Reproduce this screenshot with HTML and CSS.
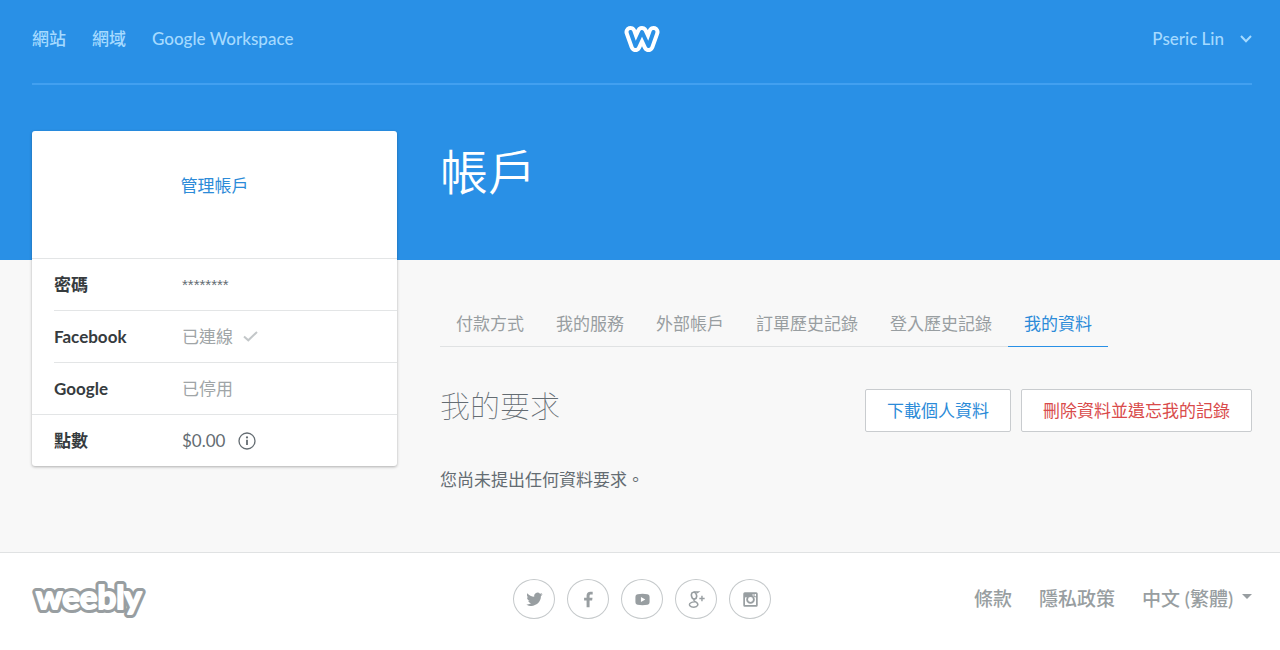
FILE: index.html
```html
<!DOCTYPE html>
<html lang="zh-Hant">
<head>
  <meta charset="UTF-8">
  <meta name="viewport" content="width=device-width, initial-scale=1">
  <title>帳戶</title>
  <link rel="stylesheet" href="styles.css">
</head>
<body>
<header class="topbar">
  <div class="topbar-inner">
    <nav class="topbar-nav">
      <a href="#">網站</a>
      <a href="#">網域</a>
      <a href="#">Google Workspace</a>
    </nav>
    <a class="topbar-logo" href="#" aria-label="Weebly">
      <svg width="36" height="28" viewBox="0 0 36 28" fill="none" stroke-linecap="round" stroke-linejoin="round">
        <path d="M6.500 7 11.500 21 18 7 24.500 21 29.500 7" stroke="#fff" stroke-width="12"/>
        <path d="M6.500 7 11.500 21 18 7 24.500 21 29.500 7" stroke="#2990e6" stroke-width="4"/>
      </svg>
    </a>
    <button class="user-menu" type="button">Pseric Lin
      <svg width="12" height="8" viewBox="0 0 12 8" fill="none" stroke="currentColor" stroke-width="2"><path d="M1 1 6 6.3 11 1"/></svg>
    </button>
  </div>
</header>

<main class="account">
  <aside class="card">
    <div class="card-head"><a href="#">管理帳戶</a></div>
    <dl class="card-rows">
      <div class="row row-full"><dt>密碼</dt><dd class="password">********</dd></div>
      <div class="row"><dt>Facebook</dt>
        <dd class="muted">已連線
          <svg class="check" width="15" height="11" viewBox="0 0 15 11" fill="none" stroke="currentColor" stroke-width="2"><path d="M1 5.5 5.3 9.3 14 1"/></svg>
        </dd>
      </div>
      <div class="row"><dt>Google</dt><dd class="muted">已停用</dd></div>
      <div class="row row-full"><dt>點數</dt>
        <dd>$0.00
          <svg width="18" height="18" viewBox="0 0 18 18" fill="none" stroke="currentColor"><circle cx="9" cy="9" r="8" stroke-width="1.3"/><path d="M9 7.800V13" stroke-width="1.800"/><circle cx="9" cy="5.4" r="1.1" fill="currentColor" stroke="none"/></svg>
        </dd>
      </div>
    </dl>
  </aside>

  <section class="content">
    <h1>帳戶</h1>
    <nav class="tabs">
      <a href="#">付款方式</a>
      <a href="#">我的服務</a>
      <a href="#">外部帳戶</a>
      <a href="#">訂單歷史記錄</a>
      <a href="#">登入歷史記錄</a>
      <a href="#" class="active">我的資料</a>
    </nav>
    <div class="section-head">
      <h2>我的要求</h2>
      <div class="actions">
        <button class="btn" type="button">下載個人資料</button>
        <button class="btn btn-danger" type="button">刪除資料並遺忘我的記錄</button>
      </div>
    </div>
    <p class="empty">您尚未提出任何資料要求。</p>
  </section>
</main>

<footer class="footer">
  <a class="wordmark" href="#" aria-label="weebly">
    <svg width="124" height="46" viewBox="0 0 124 46">
      <text class="wordmark-outline" x="4" y="33">weebly</text>
      <text class="wordmark-fill" x="4" y="33">weebly</text>
    </svg>
  </a>
  <div class="social">
    <a href="#" aria-label="Twitter"><svg width="17" height="17" viewBox="0 0 24 24" fill="currentColor"><path d="M23.5 4.6c-.8.4-1.7.6-2.7.8 1-.6 1.7-1.5 2-2.6-.9.5-1.9.9-3 1.1A4.7 4.7 0 0 0 11.700 8.200C7.800 8 4.300 6.100 2 3.200c-1.200 2.100-.6 4.900 1.500 6.300-.8 0-1.500-.2-2.100-.6 0 2.300 1.600 4.300 3.800 4.700-.7.2-1.400.2-2.100.1.600 1.900 2.400 3.200 4.400 3.300A9.500 9.500 0 0 1 .5 18.900c8.700 5.600 20.700-.5 20.600-11.900.9-.7 1.700-1.500 2.400-2.400z"/></svg></a>
    <a href="#" aria-label="Facebook"><svg width="17" height="17" viewBox="0 0 24 24" fill="currentColor"><path d="M9.300 23V13.500H5.800V9.600h3.500V6.500C9.300 3 11.400 1 14.600 1c1.500 0 2.900.1 3.300.2V5h-2.300c-1.800 0-2.100.9-2.100 2.100v2.500h4.200l-.6 3.900h-3.600V23z"/></svg></a>
    <a href="#" aria-label="YouTube"><svg width="17" height="17" viewBox="0 0 24 24" fill="currentColor" fill-rule="evenodd"><path d="M5 4.500Q12 3.500 19 4.500 22 4.600 22 8v8q0 3.400-3 3.500-7 1-14 0-3-.1-3-3.500V8q0-3.400 3-3.500zM9.800 8.300v7.400l6.200-3.700z"/></svg></a>
    <a href="#" aria-label="Google+"><svg width="17" height="17" viewBox="0 0 24 24" fill="none" stroke="currentColor"><ellipse cx="8.500" cy="6.500" rx="3.600" ry="4.800" stroke-width="2.300" transform="rotate(-12 8.500 6.500)"/><path d="M8 1.300h6.500l-2 1.400M10 11c-3 1.200-2 2.700.3 3.900 6.500 3.400 3.300 8-2 8s-8.200-3.500-4.800-6c1.900-1.500 4.500-1.600 6.300-1.600" stroke-width="2"/><path d="M16 10.500h7.500M19.700 6.700v7.600" stroke-width="2"/></svg></a>
    <a href="#" aria-label="Instagram"><svg width="17" height="17" viewBox="0 0 24 24" fill="none" stroke="currentColor"><rect x="3" y="3" width="18" height="18" rx="1" stroke-width="2.400"/><path d="M3 3.500h12V9H3z" fill="currentColor" stroke="none"/><circle cx="12" cy="12" r="4.800" fill="#fff" stroke-width="2.600"/><path d="M17 4v4h4" stroke-width="1.500"/></svg></a>
  </div>
  <nav class="footer-nav">
    <a href="#">條款</a>
    <a href="#">隱私政策</a>
    <button class="language" type="button">中文 (繁體)<span class="caret"></span></button>
  </nav>
</footer>
</body>
</html>
```
FILE: styles.css
```css
* { box-sizing: border-box; }
body {
  margin: 0;
  min-height: 100vh;
  background: #fff;
  color: #646c72;
  font-family: Lato, "Noto Sans CJK TC", sans-serif;
  font-size: 17px;
  line-height: 24px;
}
a { color: inherit; text-decoration: none; }
button { font: inherit; color: inherit; background: none; border: 0; padding: 0; cursor: pointer; }
svg { display: block; flex: none; }
h1, h2, p, dl, dd { margin: 0; }

/* top bar */
.topbar { background: #2990e6; padding: 0 28px 46px 32px; }
.topbar-inner {
  display: grid;
  grid-template-columns: 1fr auto 1fr;
  align-items: center;
  height: 85px;
  padding-bottom: 5px;
  border-bottom: 2px solid #42a0f0;
  color: #a5daff;
  font-weight: 500;
}
.topbar-nav { display: flex; gap: 26px; }
.user-menu { display: flex; align-items: center; justify-self: end; gap: 16px; }

/* account */
.account {
  display: grid;
  grid-template-columns: 365px minmax(0, 1fr);
  gap: 43px;
  align-items: start;
  padding: 0 28px 60px 32px;
  background: linear-gradient(#2990e6 129px, #f8f8f8 129px);
}
.card { background: #fff; border-radius: 3px; box-shadow: 0 1px 3px rgba(0, 0, 0, .3); }
.card-head { display: flex; align-items: center; justify-content: center; height: 127px; padding-bottom: 17px; color: #2c8bd8; }
.row { display: flex; align-items: center; height: 52px; margin-left: 22px; border-top: 1px solid #e3e5e6; }
.row-full { margin-left: 0; padding-left: 22px; }
.row dt { width: 128px; color: #363b3e; font-weight: 700; }
.row dd { display: flex; align-items: center; gap: 13px; }
.row .muted { color: #a0a5a7; gap: 10px; }
.row .password { font-family: "Liberation Sans", sans-serif; font-size: 15px; }
.check { color: #c3c7c9; }

h1 { padding-top: 5px; color: #fff; font-size: 48px; font-weight: 350; line-height: 72px; }
.tabs { display: flex; margin-top: 95px; color: #989ea1; width: fit-content; box-shadow: inset 0 -1px #e0e2e3; }
.tabs a { padding: 9px 16px 11px; }
.tabs .active { color: #2c8bd8; border-bottom: 1px solid #2990e6; padding-bottom: 10px; }
.section-head { display: flex; justify-content: space-between; align-items: flex-start; margin-top: 42px; }
h2 { font-size: 30px; font-weight: 100; line-height: 32px; }
.actions { display: flex; gap: 10px; }
.btn { height: 43px; padding: 0 21px; background: #fff; border: 1px solid #c9cccf; border-radius: 2px; color: #2c8bd8; }
.btn-danger { color: #d94b4b; }
.empty { margin-top: 36px; }

/* footer */
.footer {
  display: grid;
  grid-template-columns: 1fr auto 1fr;
  align-items: center;
  padding: 23px 28px 28px 32px;
  border-top: 1px solid #e0e2e3;
  color: #989ea1;
}
.wordmark { justify-self: start; }
.wordmark svg { overflow: visible; }
.wordmark text { font-family: Lato, sans-serif; font-size: 33px; font-weight: 700; stroke-linejoin: round; }
.wordmark-outline { fill: #989ea1; stroke: #989ea1; stroke-width: 8px; }
.wordmark-fill { fill: #fff; stroke: #fff; stroke-width: 2px; }
.social { display: flex; gap: 12px; }
.social a { display: flex; align-items: center; justify-content: center; width: 42px; height: 40px; border: 1px solid #c5c9cb; border-radius: 50%; }
.footer-nav { display: flex; justify-self: end; gap: 27px; font-size: 19px; font-weight: 500; }
.language { display: flex; align-items: center; gap: 9px; }
.caret { margin-bottom: 5px; border: 5px solid transparent; border-top-color: currentColor; border-bottom: 0; }
```
